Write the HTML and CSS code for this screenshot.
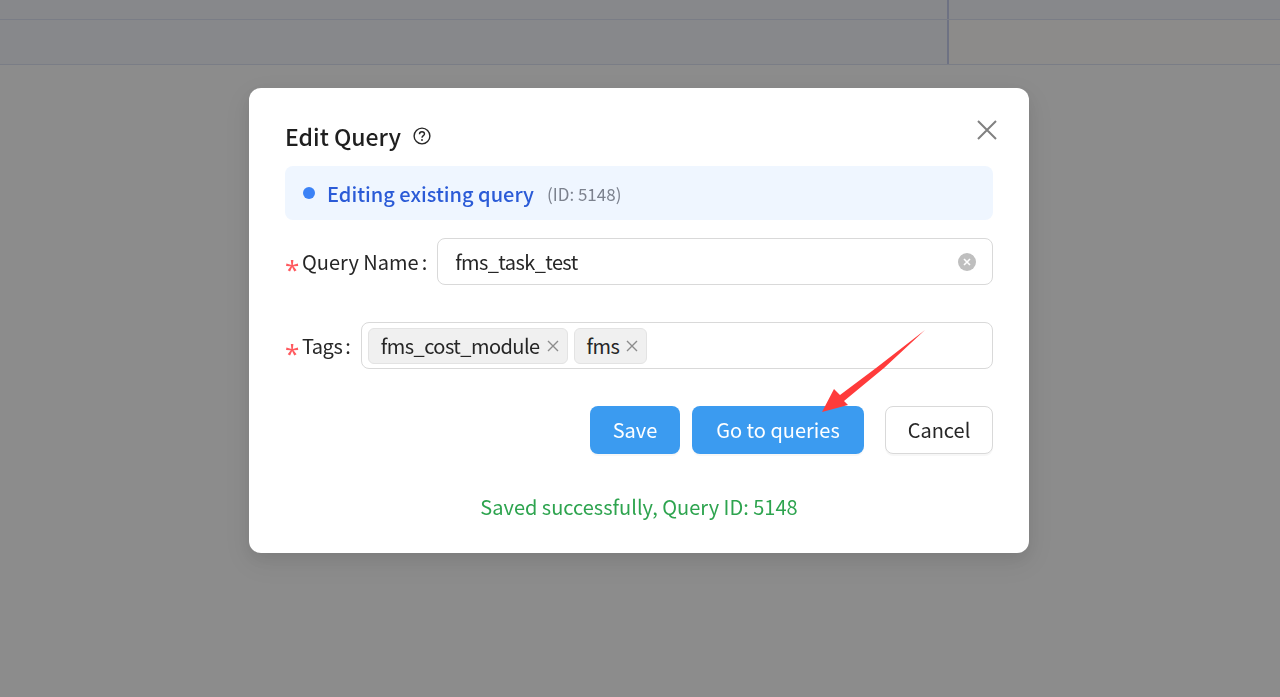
FILE: index.html
```html
<!DOCTYPE html>
<html lang="en">
<head>
    <meta charset="UTF-8">
    <meta name="viewport" content="width=device-width, initial-scale=1.0">
    <title>Edit Query</title>
    <link rel="stylesheet" href="styles.css">
</head>
<body>
    <div class="table-head">
        <div class="head-row head-top">
            <div class="cell-left"></div>
            <div class="cell-right"></div>
        </div>
        <div class="head-row head-bottom">
            <div class="cell-left"></div>
            <div class="cell-right"></div>
        </div>
    </div>

    <div class="overlay">
        <div class="modal">
            <button type="button" class="close-btn" aria-label="Close">
                <svg width="20" height="20" viewBox="0 0 20 20"><path d="M1 1 L19 19 M19 1 L1 19"/></svg>
            </button>
            <div class="modal-title">
                <h2>Edit Query</h2>
                <svg class="help-icon" width="18" height="18" viewBox="0 0 18 18">
                    <circle cx="9" cy="9" r="7.9"/>
                    <path d="M6.5 7.2 C6.5 5.7 7.6 4.8 9 4.8 C10.4 4.8 11.5 5.7 11.5 7 C11.5 8.6 9 8.8 9 10.8"/>
                    <circle class="help-dot" cx="9" cy="13" r="0.9"/>
                </svg>
            </div>
            <div class="notice">
                <span class="notice-dot"></span>
                <span class="notice-text">Editing existing query</span>
                <span class="notice-id">(ID: 5148)</span>
            </div>
            <div class="form-row name-row">
                <label class="form-label"><span class="req">*</span>Query Name<span class="colon">:</span></label>
                <div class="input-box">
                    <span class="input-value">fms_task_test</span>
                    <span class="clear-icon">
                        <svg width="8" height="8" viewBox="0 0 8 8"><path d="M1 1 L7 7 M7 1 L1 7"/></svg>
                    </span>
                </div>
            </div>
            <div class="form-row tags-row">
                <label class="form-label"><span class="req">*</span><span class="tags-word">Tags</span><span class="colon">:</span></label>
                <div class="input-box tags-box">
                    <span class="tag">fms_cost_module
                        <svg width="12" height="12" viewBox="0 0 12 12"><path d="M1 1 L11 11 M11 1 L1 11"/></svg>
                    </span>
                    <span class="tag">fms
                        <svg width="12" height="12" viewBox="0 0 12 12"><path d="M1 1 L11 11 M11 1 L1 11"/></svg>
                    </span>
                </div>
            </div>
            <div class="actions">
                <button type="button" class="btn btn-primary btn-save">Save</button>
                <button type="button" class="btn btn-primary btn-queries">Go to queries</button>
                <button type="button" class="btn btn-default">Cancel</button>
            </div>
            <div class="success-msg">Saved successfully, Query ID: 5148</div>
        </div>
        <!-- annotation drawn over the screenshot -->
        <svg class="arrow" width="1280" height="697" viewBox="0 0 1280 697">
            <polygon points="925,330 876,368 840,395 834,389 822,412 848,405 844,401 884,368"/>
        </svg>
    </div>
</body>
</html>
```

FILE: styles.css
```css
* {
    box-sizing: border-box;
}
body {
    margin: 0;
    height: 697px;
    overflow: hidden;
    font-family: "Noto Sans CJK SC", "Noto Sans", sans-serif;
    background-color: #fff;
    color: #262626;
}
.head-row {
    display: flex;
    border-bottom: 1px solid #dfe3f5;
}
.head-top {
    height: 20px;
}
.head-bottom {
    height: 45px;
}
.cell-left {
    flex: none;
    width: 949px;
    background-color: #f6f7fe;
    border-right: 2px solid #c8d0ee;
}
.cell-right {
    flex: 1;
}
.head-top .cell-right {
    background-color: #f6f7fe;
}
.head-bottom .cell-right {
    background-color: #fffefb;
}
.overlay {
    position: fixed;
    inset: 0;
    background-color: rgba(0, 0, 0, 0.45);
    display: flex;
    justify-content: center;
    align-items: flex-start;
    padding: 88px 2px 0 0;
}
.modal {
    position: relative;
    width: 780px;
    height: 465px;
    padding: 36px 36px 0;
    background-color: #fff;
    border-radius: 12px;
    box-shadow: 0 6px 16px rgba(0, 0, 0, 0.08), 0 9px 28px 8px rgba(0, 0, 0, 0.05);
}
.close-btn {
    position: absolute;
    top: 32px;
    right: 32px;
    padding: 0;
    border: 0;
    background: none;
    line-height: 0;
}
.close-btn path {
    stroke: #808080;
    stroke-width: 2;
    fill: none;
}
.modal-title {
    display: flex;
    align-items: center;
    gap: 12px;
    height: 28px;
}
.modal-title h2 {
    margin: -4px 0 0;
    font-size: 23px;
    font-weight: 500;
    line-height: 28px;
    color: #1f1f1f;
}
.help-icon {
    margin-top: -4px;
    fill: none;
    stroke: #262626;
    stroke-width: 1.4;
}
.help-icon .help-dot {
    fill: #262626;
    stroke: none;
}
.notice {
    display: flex;
    align-items: center;
    height: 54px;
    margin-top: 14px;
    padding-left: 18px;
    background-color: #eff6ff;
    border-radius: 8px;
}
.notice-dot {
    width: 12px;
    height: 12px;
    margin-right: 12px;
    border-radius: 50%;
    background-color: #3b82f6;
}
.notice-text {
    font-size: 20px;
    font-weight: 500;
    color: #2b5bd7;
}
.notice-id {
    margin-left: 13px;
    font-size: 17px;
    color: #7c828e;
}
.form-row {
    display: flex;
    align-items: center;
}
.name-row {
    margin-top: 18px;
}
.tags-row {
    margin-top: 37px;
}
.form-label {
    display: flex;
    align-items: center;
    font-size: 20px;
    color: #262626;
}
.req {
    width: 17px;
    height: 20px;
    font-family: "Noto Sans", sans-serif;
    font-size: 26px;
    line-height: 34px;
    color: #ff5a5f;
}
.tags-word {
    letter-spacing: -0.5px;
}
.colon {
    margin: 0 10px 0 3px;
}
.input-box {
    flex: 1;
    display: flex;
    align-items: center;
    height: 47px;
    padding: 0 16px 0 17px;
    border: 1px solid #d9d9d9;
    border-radius: 8px;
    background-color: #fff;
}
.input-value {
    flex: 1;
    font-size: 20px;
    letter-spacing: -0.6px;
}
.clear-icon {
    display: flex;
    align-items: center;
    justify-content: center;
    width: 18px;
    height: 18px;
    border-radius: 50%;
    background-color: #bfbfbf;
}
.clear-icon path {
    stroke: #fff;
    stroke-width: 1.6;
}
.tags-box {
    gap: 6px;
    padding: 0 6px;
}
.tag {
    display: flex;
    align-items: center;
    gap: 7px;
    height: 36px;
    padding: 0 8px 0 12px;
    font-size: 20px;
    letter-spacing: -0.55px;
    background-color: #f0f0f0;
    border: 1px solid #e3e3e3;
    border-radius: 6px;
}
.tag path {
    stroke: #8c8c8c;
    stroke-width: 1.4;
}
.actions {
    display: flex;
    justify-content: flex-end;
    margin-top: 37px;
}
.btn {
    height: 48px;
    padding: 0 0 2px;
    font-family: inherit;
    font-size: 20px;
    border-radius: 8px;
    border: 1px solid transparent;
    box-shadow: 0 2px 0 rgba(0, 0, 0, 0.03);
}
.btn-primary {
    margin-right: 12px;
    color: #fff;
    background-color: #3b9bf0;
}
.btn-save {
    width: 90px;
}
.btn-queries {
    width: 172px;
    margin-right: 21px;
}
.btn-default {
    width: 108px;
    color: #262626;
    background-color: #fff;
    border-color: #d9d9d9;
}
.success-msg {
    margin-top: 38px;
    text-align: center;
    font-size: 20px;
    color: #2ea44f;
}
.arrow {
    position: absolute;
    top: 0;
    left: 0;
    pointer-events: none;
}
.arrow polygon {
    fill: #ff3b3b;
}
```
